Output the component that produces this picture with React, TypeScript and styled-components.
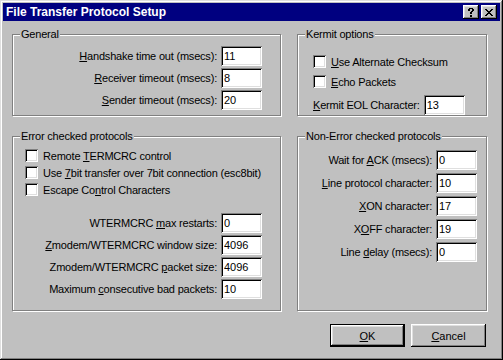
import React from 'react';
import styled, { createGlobalStyle } from 'styled-components';

const GlobalStyle = createGlobalStyle`
  html, body {
    margin: 0;
    padding: 0;
    background: #c0c0c0;
  }
  body {
    font-family: "Liberation Sans", Arial, sans-serif;
    font-size: 11px;
    letter-spacing: -0.2px;
    color: #000;
  }
`;

// win95 bevels
const raised = 'inset -1px -1px #000, inset 1px 1px #fff, inset -2px -2px #808080, inset 2px 2px #dfdfdf';
const sunken = 'inset 1px 1px #808080, inset -1px -1px #fff, inset 2px 2px #000, inset -2px -2px #dfdfdf';

const Window = styled.div`
  width: 503px;
  height: 360px;
  box-sizing: border-box;
  padding: 3px;
  background: #c0c0c0;
  box-shadow: inset -1px -1px #000, inset 1px 1px #dfdfdf, inset -2px -2px #808080, inset 2px 2px #fff;
  display: flex;
  flex-direction: column;
`;

const TitleBar = styled.div`
  height: 18px;
  background: #000080;
  display: flex;
  align-items: center;
  padding: 0 3px 0 3px;
`;

const Title = styled.span`
  flex: 1;
  color: #fff;
  font-weight: bold;
  font-size: 12px;
  letter-spacing: 0;
  white-space: nowrap;
`;

const TitleButtons = styled.div`
  display: flex;
  gap: 2px;
`;

const CaptionButton = styled.div`
  width: 16px;
  height: 14px;
  background: #c0c0c0;
  box-shadow: ${raised};
  display: flex;
  align-items: center;
  justify-content: center;
`;

const Body = styled.div`
  display: flex;
  flex-direction: column;
  padding: 13px 0 0 9px;
`;

const Grid = styled.div`
  display: grid;
  grid-template-columns: 269px 190px;
  grid-template-rows: 82px 175px;
  column-gap: 16px;
  row-gap: 20px;
`;

const Frame = styled.div<{ $pad: string }>`
  position: relative;
  box-sizing: border-box;
  border: 1px solid #808080;
  box-shadow: inset 1px 1px #fff, 1px 1px #fff;
  padding: ${(p) => p.$pad};
  display: flex;
  flex-direction: column;
`;

const Legend = styled.span`
  position: absolute;
  top: -7px;
  left: 7px;
  padding: 0 1px;
  line-height: 13px;
  background: #c0c0c0;
  white-space: nowrap;
`;

const Stack = styled.div<{ $gap: number; $top?: number }>`
  display: flex;
  flex-direction: column;
  gap: ${(p) => p.$gap}px;
  margin-top: ${(p) => p.$top || 0}px;
`;

const FieldRow = styled.div<{ $justify?: string }>`
  display: flex;
  align-items: center;
  justify-content: ${(p) => p.$justify || 'flex-end'};
  gap: 4px;
  height: 20px;
`;

const FieldLabel = styled.label`
  white-space: nowrap;
`;

const Edit = styled.input`
  width: 41px;
  height: 20px;
  box-sizing: border-box;
  border: none;
  outline: none;
  margin: 0;
  padding: 0 2px 0 3px;
  background: #fff;
  font: inherit;
  letter-spacing: 0;
  color: #000;
  box-shadow: ${sunken};
`;

const CheckRow = styled.label`
  display: flex;
  align-items: center;
  gap: 5px;
  height: 13px;
  white-space: nowrap;
`;

const CheckBox = styled.span`
  width: 13px;
  height: 13px;
  flex: none;
  background: #fff;
  box-shadow: ${sunken};
`;

const ButtonRow = styled.div`
  display: flex;
  justify-content: flex-end;
  gap: 6px;
  width: 475px;
  box-sizing: border-box;
  padding-right: 1px;
  margin-top: 13px;
`;

const PushButton = styled.button<{ $default?: boolean }>`
  width: 75px;
  height: 23px;
  box-sizing: border-box;
  margin: 0;
  padding: 0;
  background: #c0c0c0;
  color: #000;
  font: inherit;
  border: ${(p) => (p.$default ? '1px solid #000' : 'none')};
  box-shadow: ${raised};
`;

const pixels = (rows: string[]) =>
  rows
    .flatMap((r, y) => r.split('').map((c, x) => (c === '#' ? `M${x} ${y}h1v1h-1z` : '')))
    .join('');

const HELP = ['.####.', '##..##', '##..##', '...##.', '..##..', '..##..', '......', '..##..', '..##..'];
const CLOSE = ['##....##', '.##..##.', '..####..', '...##...', '..####..', '.##..##.', '##....##'];

const Glyph = ({ rows }: { rows: string[] }) => (
  <svg width={rows[0].length} height={rows.length} shapeRendering="crispEdges">
    <path d={pixels(rows)} fill="#000" />
  </svg>
);

const Field = ({ label, value, justify }: { label: React.ReactNode; value: string; justify?: string }) => (
  <FieldRow $justify={justify}>
    <FieldLabel>{label}</FieldLabel>
    <Edit defaultValue={value} readOnly />
  </FieldRow>
);

const Check = ({ children }: { children: React.ReactNode }) => (
  <CheckRow>
    <CheckBox />
    <span>{children}</span>
  </CheckRow>
);

export default function App() {
  return (
    <>
      <GlobalStyle />
      <Window>
        <TitleBar>
          <Title>File Transfer Protocol Setup</Title>
          <TitleButtons>
            <CaptionButton>
              <Glyph rows={HELP} />
            </CaptionButton>
            <CaptionButton>
              <Glyph rows={CLOSE} />
            </CaptionButton>
          </TitleButtons>
        </TitleBar>
        <Body>
          <Grid>
            <Frame $pad="11px 18px 0 0">
              <Legend>General</Legend>
              <Stack $gap={2}>
                <Field label={<><u>H</u>andshake time out (msecs):</>} value="11" />
                <Field label={<><u>R</u>eceiver timeout (msecs):</>} value="8" />
                <Field label={<><u>S</u>ender timeout (msecs):</>} value="20" />
              </Stack>
            </Frame>

            <Frame $pad="20px 0 0 15px">
              <Legend>Kermit options</Legend>
              <Stack $gap={7}>
                <Check><u>U</u>se Alternate Checksum</Check>
                <Check><u>E</u>cho Packets</Check>
                <Field justify="flex-start" label={<><u>K</u>ermit EOL Character:</>} value="13" />
              </Stack>
            </Frame>

            <Frame $pad="12px 18px 0 12px">
              <Legend>Error checked protocols</Legend>
              <Stack $gap={4}>
                <Check>Remote <u>T</u>ERMCRC control</Check>
                <Check>Use <u>7</u>bit transfer over 7bit connection (esc8bit)</Check>
                <Check>Escape Co<u>n</u>trol Characters</Check>
              </Stack>
              <Stack $gap={2} $top={17}>
                <Field label={<>WTERMCRC <u>m</u>ax restarts:</>} value="0" />
                <Field label={<><u>Z</u>modem/WTERMCRC window size:</>} value="4096" />
                <Field label={<>Zmodem/WTERMCRC <u>p</u>acket size:</>} value="4096" />
                <Field label={<>Maximum <u>c</u>onsecutive bad packets:</>} value="10" />
              </Stack>
            </Frame>

            <Frame $pad="13px 9px 0 0">
              <Legend>Non-Error checked protocols</Legend>
              <Stack $gap={3}>
                <Field label={<>Wait for <u>A</u>CK (msecs):</>} value="0" />
                <Field label={<><u>L</u>ine protocol character:</>} value="10" />
                <Field label={<><u>X</u>ON character:</>} value="17" />
                <Field label={<>X<u>O</u>FF character:</>} value="19" />
                <Field label={<>Line <u>d</u>elay (msecs):</>} value="0" />
              </Stack>
            </Frame>
          </Grid>
          <ButtonRow>
            <PushButton $default>
              <u>O</u>K
            </PushButton>
            <PushButton>
              <u>C</u>ancel
            </PushButton>
          </ButtonRow>
        </Body>
      </Window>
    </>
  );
}
